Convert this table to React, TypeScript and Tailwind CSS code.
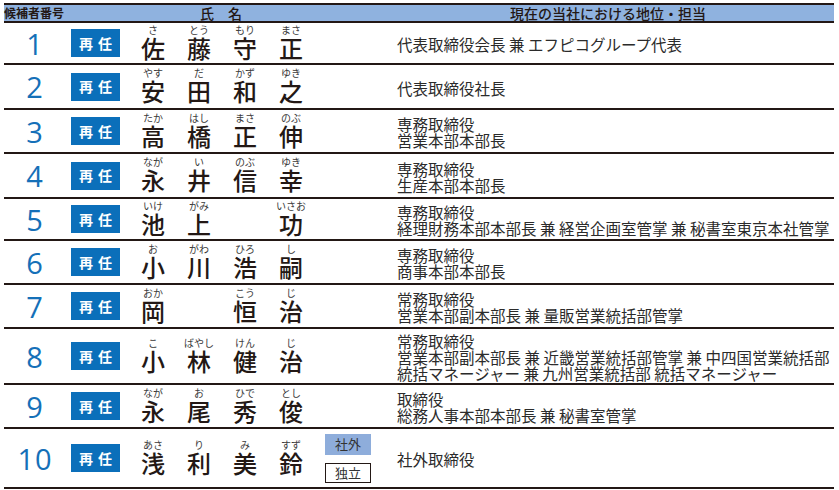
import React from "react";

type Slot = { ruby: string; kanji: string } | null;

interface Candidate {
  no: string;
  names: Slot[];
  lines: string[];
  height: string;
  outside?: boolean;
}

const candidates: Candidate[] = [
  {
    no: "1",
    names: [
      { ruby: "さ", kanji: "佐" },
      { ruby: "とう", kanji: "藤" },
      { ruby: "もり", kanji: "守" },
      { ruby: "まさ", kanji: "正" },
    ],
    lines: ["代表取締役会長 兼 エフピコグループ代表"],
    height: "h-[42px]",
  },
  {
    no: "2",
    names: [
      { ruby: "やす", kanji: "安" },
      { ruby: "だ", kanji: "田" },
      { ruby: "かず", kanji: "和" },
      { ruby: "ゆき", kanji: "之" },
    ],
    lines: ["代表取締役社長"],
    height: "h-[45px]",
  },
  {
    no: "3",
    names: [
      { ruby: "たか", kanji: "高" },
      { ruby: "はし", kanji: "橋" },
      { ruby: "まさ", kanji: "正" },
      { ruby: "のぶ", kanji: "伸" },
    ],
    lines: ["専務取締役", "営業本部本部長"],
    height: "h-[44px]",
  },
  {
    no: "4",
    names: [
      { ruby: "なが", kanji: "永" },
      { ruby: "い", kanji: "井" },
      { ruby: "のぶ", kanji: "信" },
      { ruby: "ゆき", kanji: "幸" },
    ],
    lines: ["専務取締役", "生産本部本部長"],
    height: "h-[45px]",
  },
  {
    no: "5",
    names: [
      { ruby: "いけ", kanji: "池" },
      { ruby: "がみ", kanji: "上" },
      null,
      { ruby: "いさお", kanji: "功" },
    ],
    lines: ["専務取締役", "経理財務本部本部長 兼 経営企画室管掌 兼 秘書室東京本社管掌"],
    height: "h-[42px]",
  },
  {
    no: "6",
    names: [
      { ruby: "お", kanji: "小" },
      { ruby: "がわ", kanji: "川" },
      { ruby: "ひろ", kanji: "浩" },
      { ruby: "し", kanji: "嗣" },
    ],
    lines: ["専務取締役", "商事本部本部長"],
    height: "h-[44px]",
  },
  {
    no: "7",
    names: [
      { ruby: "おか", kanji: "岡" },
      null,
      { ruby: "こう", kanji: "恒" },
      { ruby: "じ", kanji: "治" },
    ],
    lines: ["常務取締役", "営業本部副本部長 兼 量販営業統括部管掌"],
    height: "h-[44px]",
  },
  {
    no: "8",
    names: [
      { ruby: "こ", kanji: "小" },
      { ruby: "ばやし", kanji: "林" },
      { ruby: "けん", kanji: "健" },
      { ruby: "じ", kanji: "治" },
    ],
    lines: [
      "常務取締役",
      "営業本部副本部長 兼 近畿営業統括部管掌 兼 中四国営業統括部",
      "統括マネージャー 兼 九州営業統括部 統括マネージャー",
    ],
    height: "h-[56px]",
  },
  {
    no: "9",
    names: [
      { ruby: "なが", kanji: "永" },
      { ruby: "お", kanji: "尾" },
      { ruby: "ひで", kanji: "秀" },
      { ruby: "とし", kanji: "俊" },
    ],
    lines: ["取締役", "総務人事本部本部長 兼 秘書室管掌"],
    height: "h-[44px]",
  },
  {
    no: "10",
    names: [
      { ruby: "あさ", kanji: "浅" },
      { ruby: "り", kanji: "利" },
      { ruby: "み", kanji: "美" },
      { ruby: "すず", kanji: "鈴" },
    ],
    lines: ["社外取締役"],
    height: "h-[60px]",
    outside: true,
  },
];

function NameSlot({ slot }: { slot: Slot }) {
  return (
    <div className="w-[46px] flex flex-col items-center">
      <span className="text-[10px] leading-[11px] text-[#3a3a3a] h-[11px] whitespace-nowrap">
        {slot ? slot.ruby : ""}
      </span>
      <span className="text-[24px] leading-[25px] font-medium text-[#231815] h-[25px]">
        {slot ? slot.kanji : ""}
      </span>
    </div>
  );
}

export default function App() {
  return (
    <div className="w-[839px] h-[490px] bg-white pt-[3px] pl-[4px] font-['Noto_Sans_CJK_JP',sans-serif]">
      <div className="w-[830px]">
        {/* header */}
        <div className="h-[20px] flex items-center bg-[#8fb2df] border-y-2 border-[#231815] text-[#231815]">
          <div className="w-[62px] text-[12px] font-bold leading-none whitespace-nowrap">候補者番号</div>
          <div className="w-[62px]"></div>
          <div className="w-[186px] text-center text-[14px] font-medium leading-none">氏　名</div>
          <div className="w-[80px]"></div>
          <div className="flex-1 text-center text-[14px] font-medium leading-none pr-[12px]">
            現在の当社における地位・担当
          </div>
        </div>

        {candidates.map((c) => (
          <div key={c.no} className={`${c.height} flex items-center border-b-2 border-[#231815]`}>
            <div className="w-[62px] flex justify-center">
              <span className="font-['Open_Sans',sans-serif] text-[29px] leading-none text-[#1570b8] tracking-[1px]">
                {c.no}
              </span>
            </div>
            <div className="w-[62px] pl-[5px]">
              <div className="w-[49px] h-[28px] bg-[#0b6fba] flex items-center justify-center text-white text-[14px] font-bold">
                <span className="mr-[5px]">再</span>
                <span>任</span>
              </div>
            </div>
            <div className="w-[186px] pl-[2px] pb-[3px] flex">
              {c.names.map((s, i) => (
                <NameSlot key={i} slot={s} />
              ))}
            </div>
            <div className="w-[80px] pl-[11px]">
              {c.outside && (
                <div className="flex flex-col gap-[8px] w-[46px]">
                  <div className="h-[21px] bg-[#8eaddb] flex items-center justify-center text-[13px] text-[#333]">
                    社外
                  </div>
                  <div className="h-[20px] border border-[#231815] flex items-center justify-center text-[13px] text-[#333]">
                    独立
                  </div>
                </div>
              )}
            </div>
            <div className="flex-1 pl-[3px] pt-[2px] text-[15.5px] leading-[16px] text-[#2b2b2b]">
              {c.lines.map((l, i) => (
                <div key={i} className="whitespace-nowrap">
                  {l}
                </div>
              ))}
            </div>
          </div>
        ))}
      </div>
    </div>
  );
}
